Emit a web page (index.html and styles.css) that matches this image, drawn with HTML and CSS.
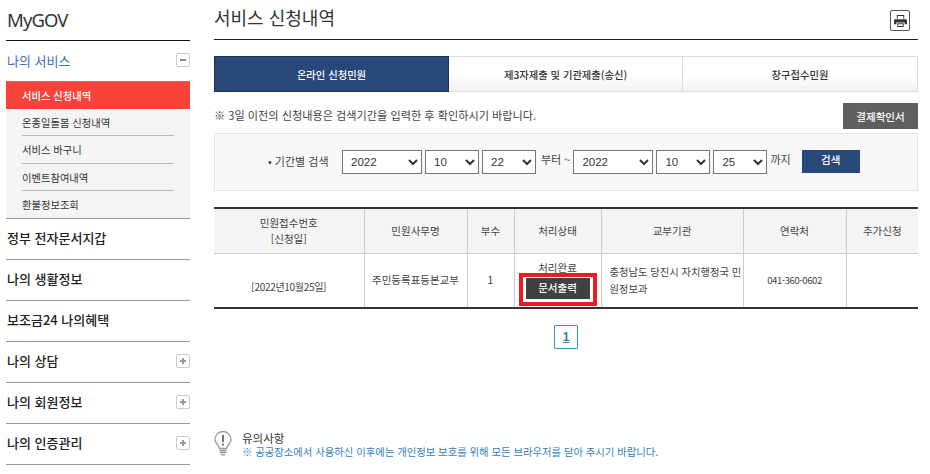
FILE: index.html
```html
<!DOCTYPE html>
<html lang="ko">
<head>
<meta charset="utf-8">
<title>서비스 신청내역</title>
<link rel="stylesheet" href="styles.css">
</head>
<body>
<div class="page">
  <aside class="side">
    <div class="brand">MyGOV</div>
    <div class="menu-row open"><span>나의 서비스</span><i class="tog minus"></i></div>
    <ul class="sub">
      <li class="on">서비스 신청내역</li>
      <li>온종일돌봄 신청내역</li>
      <li>서비스 바구니</li>
      <li>이벤트참여내역</li>
      <li>환불정보조회</li>
    </ul>
    <div class="menu-row"><span>정부 전자문서지갑</span></div>
    <div class="menu-row"><span>나의 생활정보</span></div>
    <div class="menu-row"><span>보조금24 나의혜택</span></div>
    <div class="menu-row"><span>나의 상담</span><i class="tog plus"></i></div>
    <div class="menu-row"><span>나의 회원정보</span><i class="tog plus"></i></div>
    <div class="menu-row"><span>나의 인증관리</span><i class="tog plus"></i></div>
  </aside>
  <main class="main">
    <header class="head">
      <h1>서비스 신청내역</h1>
      <button class="print" aria-label="인쇄">
        <svg width="13" height="12" viewBox="0 0 14 13"><path fill="#333" d="M3 0h8v4H3zM4 1v3h6V1zM0 5.500Q0 4.500 1 4.500H13Q14 4.500 14 5.500V10H11.500V8H2.500V10H0zM3.500 9h7v4h-7zM4.500 10v2h5v-2z" fill-rule="evenodd"/></svg>
      </button>
    </header>
    <nav class="tabs">
      <a class="tab on">온라인 신청민원</a>
      <a class="tab">제3자제출 및 기관제출(송신)</a>
      <a class="tab">창구접수민원</a>
    </nav>
    <div class="note-row">
      <p>※ 3일 이전의 신청내용은 검색기간을 입력한 후 확인하시기 바랍니다.</p>
      <button class="pay">결제확인서</button>
    </div>
    <form class="search">
      <span class="lab">• 기간별 검색</span>
      <select class="y"><option>2022</option></select>
      <select class="m"><option>10</option></select>
      <select class="m"><option>22</option></select>
      <span class="txt">부터 ~</span>
      <select class="y"><option>2022</option></select>
      <select class="m"><option>10</option></select>
      <select class="m"><option>25</option></select>
      <span class="txt end">까지</span>
      <button type="button" class="go">검색</button>
    </form>
    <table class="list">
      <colgroup>
        <col class="c1"><col class="c2"><col class="c3"><col class="c4"><col class="c5"><col class="c6"><col class="c7">
      </colgroup>
      <thead>
        <tr><th>민원접수번호<br>[신청일]</th><th>민원사무명</th><th>부수</th><th>처리상태</th><th>교부기관</th><th>연락처</th><th>추가신청</th></tr>
      </thead>
      <tbody>
        <tr>
          <td class="date">[2022년10월25일]</td>
          <td>주민등록표등본교부</td>
          <td>1</td>
          <td class="state">
            <div class="done">처리완료</div>
            <div class="mark"><button class="doc">문서출력</button></div>
          </td>
          <td class="org">충청남도 당진시 자치행정국 민원정보과</td>
          <td class="tel">041-360-0602</td>
          <td></td>
        </tr>
      </tbody>
    </table>
    <div class="pager"><a>1</a></div>
    <section class="caution">
      <svg width="18" height="25" viewBox="0 0 18 25"><path fill="none" stroke="#999" stroke-width="1.300" d="M5.500 17.500C5 14 1 12.500 1 8.500A8 8 0 0 1 17 8.500C17 12.500 13 14 12.500 17.500Z"/><path fill="none" stroke="#999" stroke-width="1.300" d="M5.500 19.500H12.500M5.500 21.500H12.500M7 23.800H11"/><path stroke="#666" stroke-width="1.800" d="M9 4V11M9 12.500V14.500"/></svg>
      <div>
        <strong>유의사항</strong>
        <p>※ 공공장소에서 사용하신 이후에는 개인정보 보호를 위해 모든 브라우저를 닫아 주시기 바랍니다.</p>
      </div>
    </section>
  </main>
</div>
</body>
</html>
```

FILE: styles.css
```css
* { box-sizing: border-box; }
html, body { margin: 0; padding: 0; background: #fff; }
body {
  width: 930px; height: 474px; overflow: hidden;
  font-family: "Noto Sans CJK KR", "Noto Sans", sans-serif;
  color: #333; font-size: 11px;
}
.page { display: flex; padding-left: 6px; align-items: flex-start; }
.side { width: 184px; flex: none; }
.brand {
  height: 41px; border-bottom: 1px solid #111;
  font: 400 18.500px/39px "Noto Sans", sans-serif; letter-spacing: -0.900px; color: #333; padding-left: 1px;
}
.menu-row {
  height: 41px; display: flex; align-items: center; justify-content: space-between;
  border-bottom: 1px solid #999; padding: 0 1px 2px;
  font-size: 13px; font-weight: 500; color: #222;
}
.menu-row.open { height: 40px; border-bottom: 0; color: #3f72b9; font-weight: 400; }
.tog {
  width: 14px; height: 14px; border: 1px solid #ccc; border-radius: 2px; position: relative;
  background: #fff; margin-right: -1px;
}
.tog::before {
  content: ""; position: absolute; left: 3px; top: 5px; width: 6px; height: 2px; background: #888;
}
.tog.plus::after {
  content: ""; position: absolute; left: 5px; top: 3px; width: 2px; height: 6px; background: #999;
}
.tog.plus::before { background: #999; }
.sub {
  list-style: none; margin: 0; padding: 0; background: #f4f4f4;
  border-bottom: 1px solid #999; border-top: 1px solid #c9716a;
}
.sub li {
  height: 27.200px; line-height: 28px; margin: 0 16px; padding-left: 0;
  border-bottom: 1px solid #bbb; font-size: 10.300px; color: #333;
}
.sub li:last-child { border-bottom: 0; }
.sub li.on {
  margin: 0; padding-left: 16px; background: #f8433a; color: #fff; border-bottom: 0; font-weight: 500;
}
.main { width: 704px; margin-left: 24px; flex: none; }
.head {
  height: 40px; border-bottom: 1px solid #222; display: flex; justify-content: space-between; align-items: flex-start;
}
.head h1 { margin: 0; font-size: 18px; font-weight: 400; line-height: 34px; color: #333; }
.print {
  width: 20px; height: 21px; margin: 10px 8px 0 0; padding: 0; border: 1px solid #555; border-radius: 2px;
  background: #fff; display: flex; align-items: center; justify-content: center;
}
.tabs {
  display: grid; grid-template-columns: 235px 234px 235px; height: 36px; margin-top: 16px;
}
.tab {
  display: flex; align-items: center; justify-content: center;
  border: 1px solid #ddd; border-left: 0; font-size: 10.300px; font-weight: 500; color: #333;
  background: linear-gradient(#fff 55%, #f1f1f1);
}
.tab.on { background: #274878; color: #fff; border: 1px solid #1c3358; }
.note-row {
  display: flex; justify-content: space-between; align-items: flex-start; margin-top: 11px; height: 30px;
}
.note-row p { margin: 3px 0 0; font-size: 11.150px; line-height: 18px; color: #444; }
.pay {
  width: 75px; height: 26px; padding: 0; border: 0; background: #5f5f5f; color: #fff;
  font: 500 10.500px "Noto Sans CJK KR", sans-serif;
}
.search {
  height: 58px; background: #f8f8f8; border: 1px solid #e6e6e6;
  display: flex; align-items: flex-start; padding: 16px 0 0 53px;
}
.lab { width: 74px; line-height: 22px; font-size: 11px; color: #444; }
.txt { line-height: 18px; font-size: 11px; color: #444; margin: 0 3px 0 2px; }
.txt.end { margin: 0 2px 0 0; }
.search select {
  height: 24px; margin: 0 3px 0 0; padding: 0 0 0 4px; border: 1px solid #777; background: #fff; border-radius: 0;
  font: 11.500px "Liberation Sans", sans-serif; color: #333;
}
.search .y { width: 80px; }
.search .m { width: 54px; }
.go {
  width: 58px; height: 23px; margin-left: 9px; padding: 0 0 4px; border: 0; background: #274878; color: #fff;
  font: 500 10.500px "Noto Sans CJK KR", sans-serif;
}
.list {
  width: 704px; margin-top: 16px; border-collapse: collapse; table-layout: fixed;
  border-top: 2px solid #333; border-bottom: 2px solid #333;
}
.c1 { width: 150px; } .c2 { width: 103px; } .c3 { width: 47px; } .c4 { width: 87px; }
.c5 { width: 142px; } .c6 { width: 103px; } .c7 { width: 72px; }
.list th, .list td {
  border-left: 1px solid #ccc; text-align: center; font-size: 10.500px; padding: 0; line-height: 16px; color: #444;
}
.list th:first-child, .list td:first-child { border-left: 0; }
.list th { height: 45px; background: #f4f4f4; font-weight: 400; border-bottom: 1px solid #ccc; }
.list td { height: 55px; vertical-align: middle; }
.list td.date { vertical-align: bottom; padding-bottom: 12px; font-size: 10px; letter-spacing: -0.300px; }
.list td.state { vertical-align: top; padding-top: 7px; }
.list td.tel { font-size: 9.500px; letter-spacing: -0.400px; }
.done { line-height: 14px; }
.mark { width: 78px; height: 33px; margin: -2px 0 0 4px; border: 4px solid #ed1c24; padding: 1px; position: relative; background: #fff; }
.doc {
  display: block; width: 64px; height: 21px; margin: 0 auto; padding: 0 0 2px; border: 0; background: #414141; color: #fff;
  font: 500 10.500px "Noto Sans CJK KR", sans-serif;
}
.list td.org { text-align: left; padding: 0 0 0 8px; font-size: 10.300px; line-height: 17px; word-break: break-all; }
.pager { display: flex; justify-content: center; margin-top: 16px; }
.pager a {
  width: 24px; height: 24px; border: 1px solid #3d93c4; border-radius: 1px;
  font: 700 12px/22px "Liberation Sans", sans-serif; color: #2e7fb0; text-align: center; text-decoration: underline;
}
.caution { display: flex; align-items: flex-start; gap: 10px; margin-top: 82px; }
.caution strong { display: block; font-weight: 400; font-size: 11.500px; line-height: 14px; color: #333; }
.caution p { margin: 0; font-size: 10.350px; line-height: 14px; color: #2f7fbf; }
```
